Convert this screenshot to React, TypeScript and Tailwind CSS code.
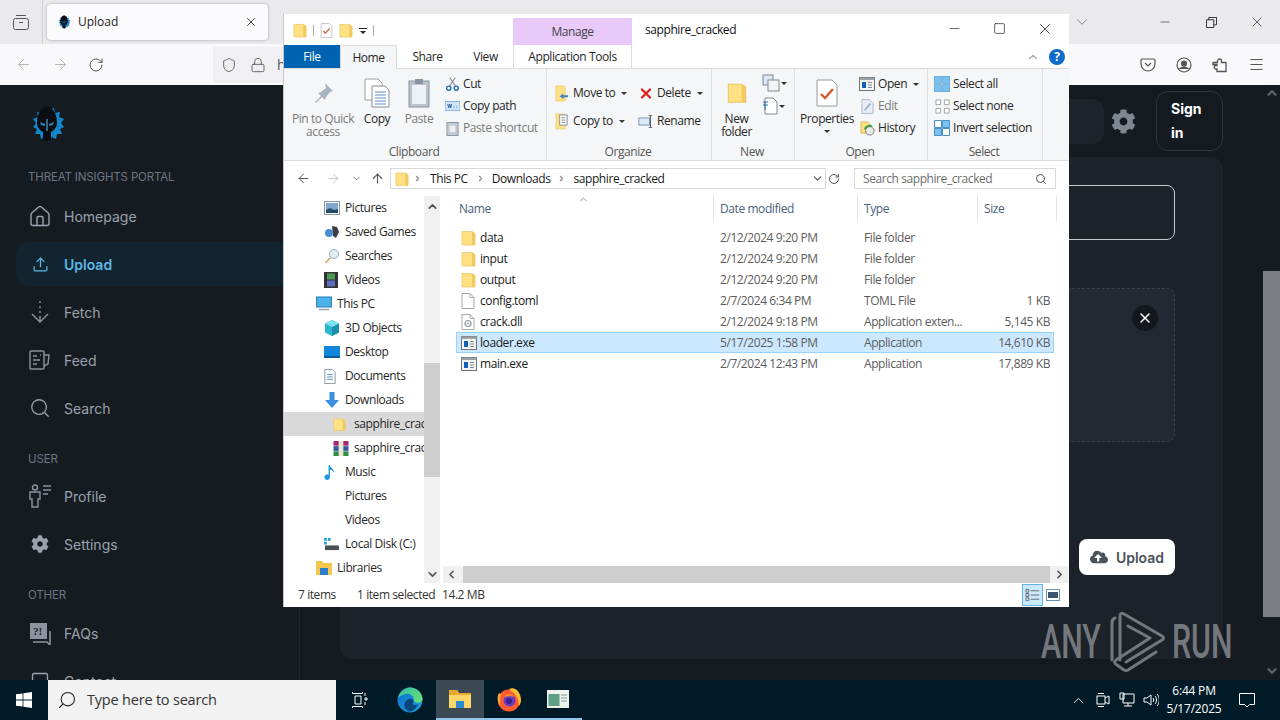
import { ArrowLeft, ArrowRight, ArrowUp, ChevronDown, ChevronLeft, ChevronRight, ChevronUp, Home, Lock, Menu, Minus, RotateCw, Search, Shield, Square, Upload, X } from "lucide-react";
import { FaCloudUploadAlt, FaCog } from "react-icons/fa";
import type { ReactNode } from "react";

function Folder({ className = "w-[15px] h-[16px]" }: { className?: string }) {
  return (
    <svg viewBox="0 0 15 16" className={className}>
      <path d="M1 1.5h10l3 2V15H1z" fill="#ffe082" stroke="#e8c868" strokeWidth="0.8" />
      <path d="M11 1.5l3 2V15h-3z" fill="#f3c95f" />
    </svg>
  );
}

function ExeIcon() {
  return (
    <svg viewBox="0 0 16 14" className="w-[16px] h-[14px]">
      <rect x="0.5" y="0.5" width="15" height="13" fill="#f4f4f4" stroke="#6d7278" />
      <rect x="0.5" y="0.5" width="15" height="2.5" fill="#9aa2a8" />
      <rect x="3" y="5" width="4" height="6" fill="#0f62b8" />
      <path d="M9 5.5h4M9 8h4M9 10.5h4" stroke="#7b8a98" />
    </svg>
  );
}

function FileIcon({ dll }: { dll?: boolean }) {
  return (
    <svg viewBox="0 0 14 16" className="w-[14px] h-[16px]">
      <path d="M1 .5h8l4 4v11H1z" fill="#fff" stroke="#a8a8a8" />
      <path d="M9 .5v4h4" fill="none" stroke="#a8a8a8" />
      {dll && <circle cx="7" cy="9.5" r="3" fill="none" stroke="#8a949c" strokeWidth="1.2" />}
      {dll && <circle cx="7" cy="9.5" r="1" fill="#8a949c" />}
    </svg>
  );
}

function CheckDoc({ className = "w-[13px] h-[15px]" }: { className?: string }) {
  return (
    <svg viewBox="0 0 22 28" className={className}>
      <path d="M1 1h15l5 5v21H1z" fill="#fff" stroke="#9a9a9a" />
      <path d="M5 15l4 4 8-9" fill="none" stroke="#d9572b" strokeWidth="2.4" />
    </svg>
  );
}

function Logo({ small }: { small?: boolean }) {
  return (
    <svg viewBox="0 0 36 38" className={small ? "w-[14px] h-[14px]" : "w-[36px] h-[38px]"}>
      <path d="M18 1l3 4 4-2 1 5 5-1-1 5 5 2-3 4 3 4-4 2 2 5-5 0-1 5-4-2-3 5-4-5-4 2-1-5-5 0 2-5-4-2 3-4-3-4 5-2-1-5 5 1 1-5 4 2z" fill="#1487c9" />
      <path d="M18 1c8 3 10 10 10 17 0 5-4 8-6 9v9h-8v-9c-2-1-6-4-6-9 0-7 2-14 10-17z" fill="#0a0e13" />
      <path d="M17.300 14h1.400v12h-1.400z" fill="#3d8fc0" />
      <path d="M11 17l5 2v2l-4-1zM25 17l-5 2v2l4-1z" fill="#2a7fb5" />
    </svg>
  );
}

function FetchIcon() {
  return (
    <svg viewBox="0 0 24 24" className="w-[24px] h-[24px]" fill="none" stroke="#8b949e" strokeWidth="1.4">
      <path d="M12 1v2M12 6v2M12 11v2M12 16v6M4 14l8 8 8-8" />
    </svg>
  );
}

function FeedIcon() {
  return (
    <svg viewBox="0 0 24 24" className="w-[24px] h-[24px]" fill="none" stroke="#8b949e" strokeWidth="1.4">
      <rect x="2" y="3" width="14" height="18" rx="1" />
      <path d="M5 8h4M5 12h7M5 16h4M16 7h5l-1 9-4 2" />
      <path d="M12 7h1" />
    </svg>
  );
}

function ProfileIcon() {
  return (
    <svg viewBox="0 0 24 24" className="w-[24px] h-[24px]" fill="none" stroke="#8b949e" strokeWidth="1.4">
      <circle cx="7" cy="3.5" r="2.5" />
      <path d="M2 8h10v7h-2v8H4v-8H2zM15 2h8M15 6h8M15 10h5" />
    </svg>
  );
}

function FaqIcon() {
  return (
    <svg viewBox="0 0 24 24" className="w-[24px] h-[24px]">
      <path d="M2 2h17v16H2z" fill="#8b949e" />
      <path d="M22 10v14l-3-3H5" fill="none" stroke="#8b949e" strokeWidth="1.6" />
      <text x="5" y="14" fontSize="11" fontWeight="700" fill="#161b22" fontFamily="Liberation Serif">?!</text>
    </svg>
  );
}

function NavItem({ icon, label, active }: { icon: ReactNode; label: string; active?: boolean }) {
  return (
    <div className={`ml-4 h-[44px] mb-1 pl-3 flex items-center gap-3 rounded-l-xl shrink-0 ${active ? "bg-[#11242f] text-[#5eb6e4] font-semibold" : "text-[#9aa3ad]"}`}>
      <span className="w-6 flex justify-center">{icon}</span>
      <span className="text-[14px]">{label}</span>
    </div>
  );
}

function SectionLabel({ children, className }: { children: string; className: string }) {
  return <div className={`pl-7 text-[11.5px] leading-4 tracking-[-0.15px] text-[#6e7681] shrink-0 ${className}`}>{children}</div>;
}

function Sidebar() {
  return (
    <aside className="w-[300px] shrink-0 h-full bg-[#161b22] border-r border-[#21262d] overflow-hidden flex flex-col font-['Inter',sans-serif]">
      <div className="pl-[29px] pt-[20px] h-[84px] shrink-0">
        <Logo />
      </div>
      <SectionLabel className="mb-[22px]">THREAT INSIGHTS PORTAL</SectionLabel>
      <div className="-mt-[13px] flex flex-col">
        <NavItem icon={<Home size={25} strokeWidth={1.4} />} label="Homepage" />
        <NavItem active icon={<Upload size={17} strokeWidth={1.8} />} label="Upload" />
        <NavItem icon={<FetchIcon />} label="Fetch" />
        <NavItem icon={<FeedIcon />} label="Feed" />
        <NavItem icon={<Search size={22} strokeWidth={1.4} />} label="Search" />
      </div>
      <SectionLabel className="mt-[17px] mb-[7px]">USER</SectionLabel>
      <NavItem icon={<ProfileIcon />} label="Profile" />
      <NavItem icon={<FaCog size={18} />} label="Settings" />
      <SectionLabel className="mt-[17px] mb-[8px]">OTHER</SectionLabel>
      <NavItem icon={<FaqIcon />} label="FAQs" />
      <NavItem icon={<Square size={20} strokeWidth={1.6} />} label="Contact" />
    </aside>
  );
}

function MainPanel() {
  return (
    <main className="flex-1 h-full px-10 flex flex-col bg-[#151a20] font-['Inter',sans-serif]">
      <header className="h-[72px] shrink-0 flex items-center justify-end">
        <div className="w-[300px] h-[45px] rounded-xl bg-[#1f242c]" />
        <FaCog size={25} className="ml-[7px] text-[#7e8790]" />
        <div className="ml-5 w-[67px] h-[60px] rounded-xl border border-[#30363d] pl-[14px] flex items-center">
          <span className="w-[40px] text-[14px] leading-[24px] font-bold text-white">Sign in</span>
        </div>
      </header>
      <section className="h-[502px] shrink-0 rounded-xl bg-[#1c222a] pt-7 pl-12 pr-12 flex flex-col">
        <div className="h-[55px] shrink-0 rounded-lg border border-[#c5c9ce]" />
        <div className="relative mt-12 h-[154px] shrink-0 rounded-lg border border-dashed border-[#39414b] bg-[#232932]">
          <div className="absolute right-[16px] top-[16px] w-[26px] h-[26px] rounded-full bg-[#14181e] flex items-center justify-center text-white">
            <X size={16} strokeWidth={2.2} />
          </div>
        </div>
        <div className="mt-[97px] flex justify-end">
          <div className="w-[96px] h-[36px] rounded-lg bg-white flex items-center justify-center gap-2 text-[14px] font-semibold text-[#4b5158]">
            <FaCloudUploadAlt size={18} />
            Upload
          </div>
        </div>
      </section>
    </main>
  );
}

function Scrollbar() {
  return (
    <div className="w-[17px] h-full shrink-0 bg-[#161b22] flex flex-col items-center text-[#5c636b]">
      <ChevronUp size={14} strokeWidth={4} className="mt-[1px] h-[14px]" />
      <div className="mt-[171px] w-full h-[346px] bg-[#7b7e82]" />
      <ChevronDown size={14} strokeWidth={4} className="mt-[47px]" />
    </div>
  );
}

function SmallAction({ icon, label, muted, caret, w }: { icon: ReactNode; label: string; muted?: boolean; caret?: boolean; w?: string }) {
  return (
    <div className={`flex items-center gap-[3px] h-[22px] ${muted ? "text-[#7a7a7a]" : "text-[#262626]"} ${w ?? ""}`}>
      <span className="w-[16px] flex justify-center">{icon}</span>
      <span>{label}</span>
      {caret && <span className="ml-[3px] w-0 h-0 border-x-[3px] border-x-transparent border-t-[3px] border-t-[#333]" />}
    </div>
  );
}

function LargeAction({ icon, label, w, muted, caret }: { icon: ReactNode; label: ReactNode; w: string; muted?: boolean; caret?: boolean }) {
  return (
    <div className={`flex flex-col items-center text-center leading-[13px] ${w} ${muted ? "text-[#7a7a7a]" : "text-[#262626]"}`}>
      <span className="h-[39px] flex items-center justify-center">{icon}</span>
      <span>{label}</span>
      {caret && <span className="mt-[5px] w-0 h-0 border-x-[3px] border-x-transparent border-t-[3px] border-t-[#333]" />}
    </div>
  );
}

function RibbonGroup({ title, w, children }: { title: string; w: string; children: ReactNode }) {
  return (
    <div className={`${w} h-full shrink-0 flex flex-col border-r border-[#dcdfe3]`}>
      <div className="flex-1 flex pt-[4px] min-h-0">{children}</div>
      <div className="h-[16px] pr-[2px] text-center text-[#555] leading-[16px]">{title}</div>
    </div>
  );
}

function Ribbon() {
  return (
    <div className="h-[92px] shrink-0 bg-[#f5f6f7] border-b border-[#dadbdc] flex">
      <RibbonGroup title="Clipboard" w="w-[263px]">
        <LargeAction w="w-[78px]" muted label={<>Pin to Quick<br />access</>} icon={
          <svg viewBox="0 0 22 22" className="w-[22px] h-[22px]"><path d="M13 1l8 8-3 1-4 5-1 3-3-3-6 6-1-1 6-6-3-3 3-1 5-4z" fill="#a9b4c0" /></svg>
        } />
        <LargeAction w="w-[30px]" label="Copy" icon={
          <svg viewBox="0 0 26 30" className="w-[26px] h-[30px]"><path d="M1 1h13l4 4v17H1z" fill="#fff" stroke="#9aa0a6" /><path d="M8 8h13l4 4v17H8z" fill="#fff" stroke="#8a9096" /><path d="M11 14h11M11 17h11M11 20h11M11 23h11M11 26h11" stroke="#5b8fc8" /></svg>
        } />
        <LargeAction w="w-[54px]" muted label="Paste" icon={
          <svg viewBox="0 0 22 30" className="w-[22px] h-[30px]"><rect x="1" y="3" width="20" height="26" fill="#b9c4d0" stroke="#8994a0" /><rect x="4" y="7" width="14" height="19" fill="#eef2f7" /><rect x="7" y="1" width="8" height="5" fill="#8994a0" /></svg>
        } />
        <div className="flex flex-col -ml-[2px]">
          <SmallAction label="Cut" icon={<svg viewBox="0 0 16 16" className="w-[15px] h-[16px]" fill="none"><path d="M5 10L11 1M11 10L5 1" stroke="#8a8f96" strokeWidth="1.2" /><circle cx="4" cy="12.5" r="2.2" stroke="#1c6db3" strokeWidth="1.5" /><circle cx="12" cy="12.5" r="2.2" stroke="#1c6db3" strokeWidth="1.5" /></svg>} />
          <SmallAction label="Copy path" icon={<svg viewBox="0 0 16 10" className="w-[15px] h-[10px]"><rect width="16" height="10" fill="#cfe3f7" stroke="#7aa6d4" /><path d="M3 3l1 4 1-4 1 4 1-4M9 6h1M12 6h1" stroke="#2d5f96" fill="none" /></svg>} />
          <SmallAction muted label="Paste shortcut" icon={<svg viewBox="0 0 14 16" className="w-[13px] h-[15px]"><rect x="1" y="1.5" width="12" height="14" fill="#c0cad5" stroke="#8994a0" /><rect x="4" y="5" width="6" height="7" fill="#eef2f7" /></svg>} />
        </div>
      </RibbonGroup>
      <RibbonGroup title="Organize" w="w-[165px]">
        <div className="flex flex-col pl-[7px] pt-[6px] w-[91px]">
          <div className="h-[28px] flex items-center">
            <SmallAction caret label="Move to" icon={
              <svg viewBox="0 0 15 18" className="w-[14px] h-[17px]"><path d="M1 1h9l1 1v15H1z" fill="#ffe082" stroke="#e8c868" strokeWidth="0.7" /><path d="M5 12l4-3v2h5v2H9v2z" fill="#3e83c6" /></svg>
            } />
          </div>
          <div className="h-[28px] flex items-center">
            <SmallAction caret label="Copy to" icon={
              <svg viewBox="0 0 15 18" className="w-[14px] h-[17px]"><path d="M1 1h9l1 1v15H1z" fill="#ffe082" stroke="#e8c868" strokeWidth="0.7" /><path d="M5 2h8v11H5z" fill="#fff" stroke="#7f8b97" /><path d="M7 5h4M7 7.500h4M7 10h4" stroke="#7f8b97" /></svg>
            } />
          </div>
        </div>
        <div className="flex flex-col pt-[6px]">
          <div className="h-[28px] flex items-center"><SmallAction caret label="Delete" icon={<X size={17} strokeWidth={3.4} className="text-[#d8211a]" />} /></div>
          <div className="h-[28px] flex items-center"><SmallAction label="Rename" icon={<svg viewBox="0 0 18 14" className="w-[17px] h-[13px]"><rect x="1" y="3" width="12" height="8" fill="#dbe8f6" stroke="#6f93b8" /><path d="M14 0v14M12 0h4M12 14h4" stroke="#444" /></svg>} /></div>
        </div>
      </RibbonGroup>
      <RibbonGroup title="New" w="w-[83px]">
        <LargeAction w="w-[49px]" label={<>New<br />folder</>} icon={<Folder className="w-[20px] h-[28px]" />} />
        <div className="flex flex-col gap-[5px] pt-[1px] pl-[1px]">
          <div className="flex items-center gap-[1px] h-[18px]">
            <svg viewBox="0 0 18 18" className="w-[18px] h-[18px]"><rect x="1" y="1" width="10" height="10" fill="#dbe8f6" stroke="#7d8a96" /><rect x="6" y="6" width="11" height="11" fill="#f3f3f3" stroke="#7d8a96" /></svg>
            <span className="w-0 h-0 border-x-[3px] border-x-transparent border-t-[3px] border-t-[#333]" />
          </div>
          <div className="flex items-center gap-[1px] h-[18px]">
            <svg viewBox="0 0 16 18" className="w-[16px] h-[18px]"><path d="M3 1h8l4 4v12H3z" fill="#fff" stroke="#7d8a96" /><path d="M1 5h5M1 8h5M3 5v8" stroke="#2a6fb5" /></svg>
            <span className="w-0 h-0 border-x-[3px] border-x-transparent border-t-[3px] border-t-[#333]" />
          </div>
        </div>
      </RibbonGroup>
      <RibbonGroup title="Open" w="w-[133px]">
        <LargeAction w="w-[64px]" caret label="Properties" icon={<CheckDoc className="w-[22px] h-[28px]" />} />
        <div className="flex flex-col">
          <SmallAction caret label="Open" icon={<ExeIcon />} />
          <SmallAction muted label="Edit" icon={<svg viewBox="0 0 14 16" className="w-[13px] h-[15px]"><path d="M1 .5h8l4 4v11H1z" fill="#e6edf5" stroke="#a9b8c8" /><path d="M4 12l6-7" stroke="#9fb4ca" strokeWidth="2" /></svg>} />
          <SmallAction label="History" icon={<svg viewBox="0 0 16 16" className="w-[15px] h-[15px]"><path d="M1 1h7l2 2v10H1z" fill="#ffe082" stroke="#d9b95c" /><circle cx="10.5" cy="10.5" r="4.5" fill="#e9e9e9" stroke="#777" /><path d="M5 9a5 5 0 0 1 8-3" fill="none" stroke="#2f9e34" strokeWidth="1.6" /></svg>} />
        </div>
      </RibbonGroup>
      <RibbonGroup title="Select" w="w-[115px]">
        <div className="flex flex-col pl-[6px]">
          <SmallAction label="Select all" icon={<svg viewBox="0 0 16 16" className="w-[16px] h-[16px]"><path d="M0 0h7.5v7.5H0zM8.5 0H16v7.5H8.5zM0 8.5h7.5V16H0zM8.5 8.5H16V16H8.5z" fill="#7cc0f0" stroke="#4a90c8" strokeWidth=".5" /></svg>} />
          <SmallAction label="Select none" icon={<svg viewBox="0 0 16 16" className="w-[15px] h-[15px]" fill="#fff" stroke="#a0a0a0"><path d="M1 1h5v5H1zM10 1h5v5h-5zM1 10h5v5H1zM10 10h5v5h-5z" /></svg>} />
          <SmallAction label="Invert selection" icon={<svg viewBox="0 0 16 16" className="w-[16px] h-[16px]"><path d="M.5 8.5h7v7h-7zM8.5.5h7v7h-7z" fill="#7cc0f0" stroke="#4a90c8" /><path d="M.5.5h7v7h-7zM8.5 8.5h7v7h-7z" fill="#fff" stroke="#4a90c8" /></svg>} />
        </div>
      </RibbonGroup>
    </div>
  );
}

function navIcon(kind: string) {
  switch (kind) {
    case "pictures":
      return <svg viewBox="0 0 16 14" className="w-[16px] h-[14px]"><rect x=".5" y=".5" width="15" height="13" fill="#fff" stroke="#8a949e" /><rect x="2" y="2" width="12" height="10" fill="#7ea9cc" /><path d="M2 9l4-2 4 2 4-1v4H2z" fill="#27496a" /></svg>;
    case "games":
      return <svg viewBox="0 0 16 16" className="w-[16px] h-[16px]"><path d="M8 2l5 1 2 5-3 6-3-2z" fill="#3b3f45" /><circle cx="5" cy="9" r="4" fill="#4a8ed0" /></svg>;
    case "search":
      return <svg viewBox="0 0 16 16" className="w-[16px] h-[16px]" fill="none"><circle cx="10" cy="6" r="4.5" fill="#e5eff8" stroke="#93a9bf" /><path d="M6.5 9.5L1.5 15" stroke="#c7a76a" strokeWidth="1.6" /></svg>;
    case "videos":
      return <svg viewBox="0 0 14 16" className="w-[14px] h-[16px]"><rect width="14" height="16" fill="#333" /><rect x="3" y="1.5" width="8" height="6" fill="#4a9a56" /><rect x="3" y="8.5" width="8" height="6" fill="#5d6ec0" /></svg>;
    case "pc":
      return <svg viewBox="0 0 16 16" className="w-[16px] h-[16px]"><rect x=".5" y="1" width="15" height="10" fill="#4bb3ea" stroke="#2b7fb5" /><path d="M3 13.5h10" stroke="#8fa3b3" strokeWidth="1.5" /></svg>;
    case "3d":
      return <svg viewBox="0 0 16 16" className="w-[16px] h-[16px]"><path d="M8 0l7 3.5v9L8 16l-7-3.5v-9z" fill="#2bb5cf" /><path d="M8 7l7-3.5v9L8 16z" fill="#1990ab" /><path d="M8 0l7 3.5L8 7 1 3.5z" fill="#7fe0ef" /></svg>;
    case "desktop":
      return <svg viewBox="0 0 16 12" className="w-[16px] h-[12px]"><rect width="16" height="12" fill="#0f86d8" /><rect y="10" width="16" height="2" fill="#075d9b" /></svg>;
    case "docs":
      return <svg viewBox="0 0 12 16" className="w-[12px] h-[15px]"><path d="M.5.5h8l3 3v12H.5z" fill="#fff" stroke="#8a949e" /><path d="M3 6h6M3 8.5h6M3 11h6" stroke="#4d86bd" /></svg>;
    case "downloads":
      return <svg viewBox="0 0 16 16" className="w-[16px] h-[16px]"><path d="M5.5 0h5v8H15l-7 8-7-8h4.5z" fill="#3d8fe0" /></svg>;
    case "folder":
      return <Folder className="w-[13px] h-[15px]" />;
    case "rar":
      return <svg viewBox="0 0 16 16" className="w-[16px] h-[15px]"><rect width="16" height="5" fill="#a5276f" /><rect y="5.5" width="16" height="5" fill="#31589f" /><rect y="11" width="16" height="5" fill="#2e8f46" /><rect x="5.5" width="5" height="16" fill="#efe7d2" /></svg>;
    case "music":
      return <svg viewBox="0 0 12 16" className="w-[11px] h-[15px]"><path d="M5 0h1.5c.5 3 5 4 4 8-1-2-2-3-4-3v8a3 3 0 1 1-1.5-2.5z" fill="#1e95de" /></svg>;
    case "disk":
      return <svg viewBox="0 0 16 14" className="w-[15px] h-[13px]"><rect x="0" y="0" width="3" height="3" fill="#27a3dc" /><rect x="4" y="0" width="3" height="3" fill="#27a3dc" /><rect x="0" y="4" width="3" height="3" fill="#27a3dc" /><rect x="1" y="8" width="15" height="5" fill="#4a4f55" /></svg>;
    case "libraries":
      return <svg viewBox="0 0 16 14" className="w-[16px] h-[14px]"><path d="M0 0h6l2 2h8v12H0z" fill="#f5c74f" /><rect x="4" y="7" width="8" height="7" fill="#2b7fc4" /></svg>;
    default:
      return null;
  }
}

const navRows = [
  { label: "Pictures", icon: "pictures", indent: 40 },
  { label: "Saved Games", icon: "games", indent: 40 },
  { label: "Searches", icon: "search", indent: 40 },
  { label: "Videos", icon: "videos", indent: 40 },
  { label: "This PC", icon: "pc", indent: 32 },
  { label: "3D Objects", icon: "3d", indent: 40 },
  { label: "Desktop", icon: "desktop", indent: 40 },
  { label: "Documents", icon: "docs", indent: 40 },
  { label: "Downloads", icon: "downloads", indent: 40 },
  { label: "sapphire_cracked", icon: "folder", indent: 49, selected: true },
  { label: "sapphire_cracked.rar", icon: "rar", indent: 49 },
  { label: "Music", icon: "music", indent: 40 },
  { label: "Pictures", icon: "", indent: 40 },
  { label: "Videos", icon: "", indent: 40 },
  { label: "Local Disk (C:)", icon: "disk", indent: 40 },
  { label: "Libraries", icon: "libraries", indent: 32 },
];

const files = [
  { name: "data", date: "2/12/2024 9:20 PM", type: "File folder", size: "", icon: "folder" },
  { name: "input", date: "2/12/2024 9:20 PM", type: "File folder", size: "", icon: "folder" },
  { name: "output", date: "2/12/2024 9:20 PM", type: "File folder", size: "", icon: "folder" },
  { name: "config.toml", date: "2/7/2024 6:34 PM", type: "TOML File", size: "1 KB", icon: "file" },
  { name: "crack.dll", date: "2/12/2024 9:18 PM", type: "Application exten...", size: "5,145 KB", icon: "dll" },
  { name: "loader.exe", date: "5/17/2025 1:58 PM", type: "Application", size: "14,610 KB", icon: "exe", selected: true },
  { name: "main.exe", date: "2/7/2024 12:43 PM", type: "Application", size: "17,889 KB", icon: "exe" },
];

function FileRow({ name, date, type, size, icon, selected }: { name: string; date: string; type: string; size: string; icon: string; selected?: boolean }) {
  return (
    <div className={`w-[598px] grid grid-cols-[263px_144px_114px_75px] h-[21px] items-center border ${selected ? "bg-[#cce8ff] border-[#99d1ff]" : "border-transparent"}`}>
      <div className="flex items-center text-[#1a1a1a]">
        <span className="w-[23px] pl-[4px] flex items-center justify-start">
          {icon === "folder" && <Folder />}
          {icon === "file" && <FileIcon />}
          {icon === "dll" && <FileIcon dll />}
          {icon === "exe" && <ExeIcon />}
        </span>
        {name}
      </div>
      <div className="text-[#5c5c5c]">{date}</div>
      <div className="text-[#5c5c5c]">{type}</div>
      <div className="text-[#5c5c5c] text-right pr-[3px]">{size}</div>
    </div>
  );
}

function ExplorerWindow() {
  return (
    <div className="absolute left-[283px] top-[14px] w-[786px] h-[593px] bg-white flex flex-col overflow-hidden text-[12px] font-['Open_Sans',sans-serif] tracking-[-0.42px] text-[#262626] border-l border-[#c8c8c8]">
      <div className="h-[31px] shrink-0 flex">
        <div className="w-[229px] flex items-center pl-[9px] gap-[6px] pt-[2px]">
          <Folder className="w-[14px] h-[17px]" />
          <span className="w-px h-[11px] bg-[#aaa]" />
          <CheckDoc />
          <Folder className="w-[14px] h-[17px]" />
          <svg viewBox="0 0 8 6" className="w-[8px] h-[6px]"><path d="M0 0h8v1H0zM1 3h6L4 6z" fill="#222" /></svg>
          <span className="w-px h-[11px] bg-[#aaa]" />
        </div>
        <div className="mt-[4px] w-[119px] h-[27px] bg-[#e8c9f8] flex items-center justify-center text-[#444]">Manage</div>
        <div className="pl-[13px] pt-[7px] text-[#111]">sapphire_cracked</div>
        <div className="ml-auto mr-[1px] flex h-[29px] text-[#111]">
          <span className="w-[46px] flex items-center justify-center"><Minus size={15} strokeWidth={1} /></span>
          <span className="w-[45px] flex items-center justify-center"><Square size={13} strokeWidth={1.2} /></span>
          <span className="w-[46px] flex items-center justify-center"><X size={18} strokeWidth={1} /></span>
        </div>
      </div>
      <div className="h-[24px] shrink-0 flex border-b border-[#dadbdc] relative">
        <div className="w-[56px] h-[23px] bg-[#0063b1] text-white flex items-center justify-center">File</div>
        <div className="w-[57px] h-[24px] bg-[#f5f6f7] border-x border-t border-[#dadbdc] flex items-center justify-center">Home</div>
        <div className="w-[61px] flex items-center justify-center">Share</div>
        <div className="w-[55px] flex items-center justify-center">View</div>
        <div className="w-[119px] border-x border-[#dadbdc] flex items-center justify-center">Application Tools</div>
        <div className="ml-auto flex items-center gap-[9px] pr-[4px]">
          <ChevronUp size={14} className="text-[#a9a9a9]" />
          <span className="w-[16px] h-[16px] rounded-full bg-[#0d6cc7] text-white font-bold text-[12px] flex items-center justify-center">?</span>
        </div>
      </div>
      <Ribbon />
      <div className="h-[35px] shrink-0 flex items-center text-[#1a1a1a]">
        <ArrowLeft size={15} strokeWidth={1.6} className="ml-[12px] text-[#5a5a5a]" />
        <ArrowRight size={15} strokeWidth={1.6} className="ml-[15px] text-[#c4c4c4]" />
        <ChevronDown size={11} strokeWidth={2} className="ml-[10px] text-[#777]" />
        <ArrowUp size={15} strokeWidth={1.8} className="ml-[8px] text-[#5a5a5a]" />
        <div className="ml-[5px] w-[436px] h-[21px] border border-[#d9d9d9] flex items-center">
          <Folder className="ml-[4px] w-[14px] h-[16px]" />
          <ChevronRight size={9} strokeWidth={3} className="ml-[4px] text-[#888]" />
          <span className="ml-[8px]">This PC</span>
          <ChevronRight size={9} strokeWidth={3} className="ml-[8px] text-[#888]" />
          <span className="ml-[7px]">Downloads</span>
          <ChevronRight size={9} strokeWidth={3} className="ml-[7px] text-[#888]" />
          <span className="ml-[7px]">sapphire_cracked</span>
          <ChevronDown size={13} className="ml-auto mr-[1px] text-[#555]" />
        </div>
        <RotateCw size={12} className="w-[16px] text-[#555]" />
        <div className="ml-[12px] w-[202px] h-[21px] border border-[#d9d9d9] flex items-center pl-[8px] text-[#6d6d6d]">
          Search sapphire_cracked
          <Search size={12} className="ml-auto mr-[8px] text-[#555]" />
        </div>
      </div>
      <div className="flex-1 min-h-0 flex">
        <div className="w-[140px] shrink-0 overflow-hidden flex flex-col">
          {navRows.map((r, i) => (
            <div key={i} className={`h-[24px] shrink-0 flex items-center whitespace-nowrap overflow-hidden ${r.selected ? "bg-[#d9d9d9]" : ""}`} style={{ paddingLeft: r.indent }}>
              <span className="w-[21px] shrink-0 flex items-center">{navIcon(r.icon)}</span>
              <span>{r.label}</span>
            </div>
          ))}
        </div>
        <div className="w-[16px] shrink-0 bg-[#f0f0f0] flex flex-col items-center text-[#555]">
          <ChevronUp size={13} strokeWidth={3} className="mt-[4px]" />
          <div className="mt-[150px] w-full h-[114px] bg-[#cdcdcd]" />
          <ChevronDown size={13} strokeWidth={3} className="mt-[91px]" />
        </div>
        <div className="flex-1 min-w-0 flex flex-col pl-[3px]">
          <div className="h-[26px] shrink-0 relative flex text-[#4c607a] ml-[13px]">
            <ChevronUp size={11} className="absolute left-[122px] -top-[2px] text-[#888]" />
            <div className="w-[258px] border-r border-[#e5e5e5] pl-[3px] flex items-center">Name</div>
            <div className="w-[144px] border-r border-[#e5e5e5] pl-[6px] flex items-center">Date modified</div>
            <div className="w-[120px] border-r border-[#e5e5e5] pl-[6px] flex items-center">Type</div>
            <div className="w-[79px] border-r border-[#e5e5e5] pl-[6px] flex items-center">Size</div>
          </div>
          <div className="flex-1 pt-[5px] pl-[13px]">
            {files.map((f) => (
              <FileRow key={f.name} {...f} />
            ))}
          </div>
          <div className="h-[17px] shrink-0 bg-[#f0f0f0] flex items-center text-[#555]">
            <ChevronLeft size={13} strokeWidth={3} className="ml-[2px]" />
            <div className="ml-[5px] w-[587px] h-full bg-[#cdcdcd]" />
            <ChevronRight size={13} strokeWidth={3} className="ml-[3px]" />
          </div>
        </div>
      </div>
      <div className="h-[24px] shrink-0 flex items-center pl-[14px] text-[#333]">
        <span className="w-[59px]">7 items</span>
        <span className="w-[85px]">1 item selected</span>
        <span>14.2 MB</span>
        <div className="ml-auto mr-[7px] flex items-center">
          <span className="w-[21px] h-[22px] bg-[#cce8ff] border border-[#62b5e8] flex items-center justify-center">
            <svg viewBox="0 0 16 14" className="w-[15px] h-[14px]" fill="none" stroke="#666"><path d="M1 1h3v3H1zM1 5.5h3v3H1zM1 10h3v3H1zM6 2.5h9M6 7h9M6 11.5h9" /></svg>
          </span>
          <span className="w-[19px] flex justify-center">
            <svg viewBox="0 0 14 12" className="w-[14px] h-[12px]"><rect x=".5" y=".5" width="13" height="11" fill="#fff" stroke="#6a8fb0" /><rect x="2" y="3" width="10" height="6" fill="#3c566f" /></svg>
          </span>
        </div>
      </div>
    </div>
  );
}

function WinLogo() {
  return (
    <svg viewBox="0 0 16 16" className="w-[16px] h-[16px]" fill="#fff">
      <path d="M0 2.3L6.6 1.4v6.2H0zM7.4 1.3L16 0v7.6H7.4zM0 8.4h6.6v6.2L0 13.7zM7.4 8.4H16V16l-8.6-1.3z" />
    </svg>
  );
}

function EdgeIcon() {
  return (
    <svg viewBox="0 0 26 26" className="w-[26px] h-[26px]">
      <defs>
        <linearGradient id="edgeTop" x1="0" y1="0" x2="1" y2="1"><stop offset="0" stopColor="#33bfa5" /><stop offset="1" stopColor="#6ee06d" /></linearGradient>
        <linearGradient id="edgeLow" x1="0" y1="0" x2="1" y2="1"><stop offset="0" stopColor="#0f6fc6" /><stop offset="1" stopColor="#1ba0e2" /></linearGradient>
      </defs>
      <circle cx="13" cy="13" r="12.5" fill="url(#edgeLow)" />
      <path d="M1 11C3 3 10 .5 13 .5c7 0 12 5 12.5 11 .2 3-3 5-6 4-2-.5-3-2-2.5-3.500C16 8 12 6 8 7 4.500 8 2 10 1 11z" fill="url(#edgeTop)" />
      <path d="M12 12c4-1 5 2 4 4-1.500 2.500 3 2 5 1.500-2 5-7 7.500-9 7-4-1-6-6-4-9 1-1.700 2.500-3 4-3.500z" fill="#052f5f" opacity="0.75" />
    </svg>
  );
}

function FirefoxIcon() {
  return (
    <svg viewBox="0 0 26 26" className="w-[26px] h-[26px]">
      <circle cx="13" cy="14.500" r="11" fill="#ff5b2e" />
      <path d="M13 3c6-3 12 3 12 11 0 2-.5 4-2 6 0-6-2-11-10-17z" fill="#ffbd2f" />
      <path d="M3 7c-2 3-2 9 1 13 0-5 0-10 2-13 0 2 1 3 2 3z" fill="#ffa436" />
      <circle cx="13.500" cy="14.500" r="6" fill="#6a3bc0" />
      <path d="M8 11c2-4 8-4 10 0-2-1-7-1-10 0z" fill="#ff8a2a" />
      <circle cx="13" cy="15" r="3" fill="#3f1f8c" />
    </svg>
  );
}

function Taskbar() {
  return (
    <footer className="h-[40px] shrink-0 bg-[#001b27] flex items-center text-white font-['Open_Sans',sans-serif]">
      <div className="w-[48px] h-full flex items-center justify-center"><WinLogo /></div>
      <div className="w-[288px] h-full bg-[#f2f2f2] flex items-center pl-[9px] text-[14.5px] tracking-[-0.2px] text-[#333]">
        <Search size={20} strokeWidth={1.3} className="-scale-x-100 text-[#222]" />
        <span className="ml-[10px]">Type here to search</span>
      </div>
      <div className="w-[48px] h-full flex items-center justify-center">
        <svg viewBox="0 0 16 16" className="w-[16px] h-[16px]" fill="none" stroke="#fff"><path d="M.5 0v1.500h10V0M3 4h6v8H3zM.5 16v-1.500h10V16M13 1v3M13 6h2v2h-2zM13 10v3" /></svg>
      </div>
      <div className="w-[52px] h-full flex items-center justify-center"><EdgeIcon /></div>
      <div className="w-[48px] h-full bg-[#3b4a54] flex items-center justify-center border-b-2 border-[#8fc7ea]">
        <svg viewBox="0 0 24 20" className="w-[24px] h-[20px]"><path d="M1 1h8l2 3h12v15H1z" fill="#ffd766" /><path d="M1 1h8l2 3h12v2H1z" fill="#e8a92e" /><rect x="8" y="12" width="8" height="7" fill="#2a8bd0" /></svg>
      </div>
      <div className="w-[50px] h-full flex items-center justify-center border-b-2 border-[#8fc7ea] box-border"><FirefoxIcon /></div>
      <div className="w-[48px] h-full flex items-center justify-center border-b-2 border-[#8fc7ea]">
        <svg viewBox="0 0 22 18" className="w-[22px] h-[18px]"><rect width="22" height="18" fill="#eef3ee" /><rect x="1.500" y="4" width="11" height="12" fill="#5f9e89" /><path d="M14 5h6M14 8h6M14 11h6" stroke="#8a9a8e" /></svg>
      </div>
      <div className="ml-auto flex items-center h-full">
        <ChevronUp size={17} strokeWidth={1.3} className="mr-[8px]" />
        <svg viewBox="0 0 16 16" className="w-[16px] h-[16px] mr-[8px]" fill="none" stroke="#fff"><rect x="2" y="4" width="8" height="8" /><path d="M10 6l4-2v8l-4-2M3 1.500h6M3 14.500h6" /></svg>
        <svg viewBox="0 0 16 16" className="w-[16px] h-[16px] mr-[8px]" fill="none" stroke="#fff"><path d="M4 2h11v9H4zM1 1h4v6H1zM9 11v3M5 14h8" /></svg>
        <svg viewBox="0 0 16 16" className="w-[16px] h-[16px]" fill="none" stroke="#fff"><path d="M1 6h3l4-3v10L4 10H1zM10 6c1 1 1 3 0 4M12 4c2 2 2 6 0 8M14 2c3 3 3 9 0 12" /></svg>
        <div className="w-[72px] -ml-[1px] mr-[4px] text-center text-[12px] leading-[18px] tracking-[-0.2px]">
          <div>6:44 PM</div>
          <div>5/17/2025</div>
        </div>
        <div className="w-[46px] pl-[5px] flex items-center">
          <svg viewBox="0 0 16 16" className="w-[16px] h-[16px]" fill="none" stroke="#fff"><path d="M.5 1.500h15v11h-5l-2.500 2.500-2.500-2.500h-5z" /></svg>
        </div>
      </div>
    </footer>
  );
}

function Watermark() {
  return (
    <div className="absolute left-[1041px] top-[610px] h-[62px] flex items-center text-[#84888c] opacity-85 font-['Roboto',sans-serif] font-medium">
      <span className="w-[61px] text-[49px] leading-none scale-x-[0.62] origin-left whitespace-nowrap">ANY</span>
      <svg viewBox="0 0 58 62" className="ml-[8px] w-[58px] h-[62px]" fill="none" stroke="currentColor" strokeWidth="3" strokeLinejoin="round" strokeLinecap="round">
        <path d="M5 8Q2 9 2 13V50" />
        <path d="M10 50V6Q10 2 14 4L52 26Q55 28 52 30L16 52" />
        <path d="M18 16L40 28L6 50Q3 53 7 55L14 60Q16 61 18 60L46 42" />
      </svg>
      <span className="ml-[4px] w-[60px] text-[49px] leading-none scale-x-[0.62] origin-left whitespace-nowrap">RUN</span>
    </div>
  );
}

export default function App() {
  return (
    <div className="relative w-[1280px] h-[720px] overflow-hidden flex flex-col bg-[#161b22]">
      <div className="h-[44px] shrink-0 bg-[#e9e9ee] flex items-center font-['Open_Sans',sans-serif] text-[12px] text-[#222]">
        <div className="w-[43px] h-full flex items-center justify-center border-r border-[#cfcfd4]">
          <svg viewBox="0 0 16 16" className="w-[16px] h-[16px]" fill="none" stroke="#555"><rect x=".5" y="4.500" width="15" height="11" rx="2" /><path d="M3 1.500h10M6 8.500h4" /></svg>
        </div>
        <div className="ml-[4px] w-[221px] h-[36px] rounded bg-[#fbfbfd] shadow-[0_0_3px_rgba(0,0,0,0.3)] flex items-center pl-[10px]">
          <Logo small />
          <span className="ml-[7px]">Upload</span>
          <X size={14} strokeWidth={1.4} className="ml-auto mr-[10px]" />
        </div>
        <div className="ml-auto flex items-center h-full text-[#222]">
          <ChevronDown size={18} strokeWidth={1} className="mr-[51px] text-[#666]" />
          <span className="w-[46px] flex justify-center"><Minus size={14} strokeWidth={1} /></span>
          <span className="w-[46px] flex justify-center"><svg viewBox="0 0 12 12" className="w-[11px] h-[11px]" fill="none" stroke="#222"><path d="M.5 3h8v8.500h-8zM3 3V.5h8.500v8H9" /></svg></span>
          <span className="w-[46px] flex justify-center"><X size={16} strokeWidth={1} /></span>
        </div>
      </div>
      <div className="h-[41px] shrink-0 bg-[#f9f9fb] flex items-center text-[#555]">
        <ArrowLeft size={17} strokeWidth={1.4} className="ml-[15px] text-[#b5b5b8]" />
        <ArrowRight size={17} strokeWidth={1.4} className="ml-[20px] text-[#b5b5b8]" />
        <RotateCw size={16} strokeWidth={1.5} className="ml-[19px]" />
        <div className="ml-[109px] w-[80px] h-[36px] bg-[#f0f0f4] flex items-center pl-[8px] gap-[13px] font-['Open_Sans',sans-serif] text-[14px]">
          <Shield size={16} strokeWidth={1.3} />
          <Lock size={16} strokeWidth={1.3} />
          <span className="-ml-[2px]">h</span>
        </div>
        <div className="ml-auto flex items-center text-[#444]">
          <span className="w-[36px] flex justify-center"><svg viewBox="0 0 16 16" className="w-[16px] h-[16px]" fill="none" stroke="#555" strokeWidth="1.2"><path d="M2 2h12a1 1 0 0 1 1 1v4a7 7 0 0 1-14 0V3a1 1 0 0 1 1-1zM5 6l3 3 3-3" /></svg></span>
          <span className="w-[36px] flex justify-center"><svg viewBox="0 0 16 16" className="w-[16px] h-[16px]" fill="none" stroke="#555" strokeWidth="1.2"><circle cx="8" cy="8" r="7" /><circle cx="8" cy="6.500" r="2.500" fill="#555" /><path d="M3.500 12c2-2.500 7-2.500 9 0" fill="#555" /></svg></span>
          <span className="w-[36px] flex justify-center"><svg viewBox="0 0 16 16" className="w-[16px] h-[16px]" fill="none" stroke="#555" strokeWidth="1.3"><path d="M1 5.500h4.500V4a2 2 0 0 1 4 0v1.500H14v9H5v-2.500H3.500a1.800 1.800 0 0 1 0-3.500H5v-1H1z" /></svg></span>
          <span className="w-[36px] mr-[6px] flex justify-center"><Menu size={17} strokeWidth={1.3} /></span>
        </div>
      </div>
      <div className="h-[595px] shrink-0 flex">
        <Sidebar />
        <MainPanel />
        <Scrollbar />
      </div>
      <Taskbar />
      <ExplorerWindow />
      <Watermark />
    </div>
  );
}
